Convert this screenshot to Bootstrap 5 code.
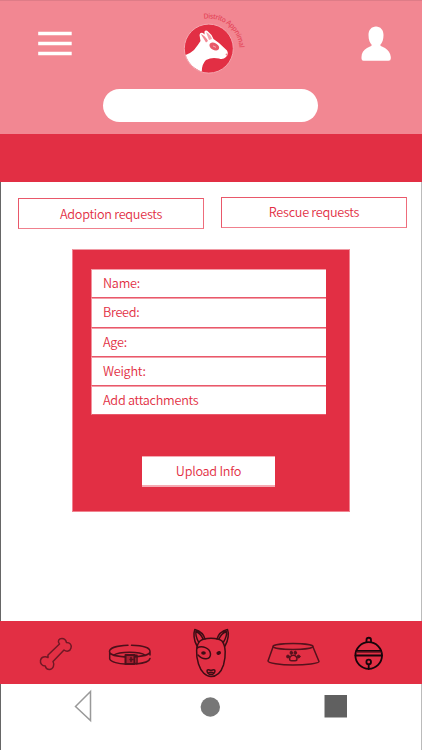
<!DOCTYPE html>
<html lang="en">
<head>
<meta charset="utf-8">
<meta name="viewport" content="width=device-width, initial-scale=1">
<title>Distrito Appnimal</title>
<link href="https://cdn.jsdelivr.net/npm/bootstrap@5.3.0/dist/css/bootstrap.min.css" rel="stylesheet">
<style>
  :root { --brand: #e22f44; --brand-soft: #f28792; }
  body { font-family: "Noto Sans CJK SC", "Open Sans", sans-serif; font-size: 12.7px; font-weight: 350; letter-spacing: -.28px; line-height: 20px; color: var(--brand); overflow: hidden; }
  svg { display: block; flex: none; overflow: visible; }
  .app { height: 750px; border-left: 1px solid #666; border-right: 1px solid #bbb; }
  .top, .strip, .tabs { margin: 0 -1px; }
  .top { height: 134px; background: var(--brand-soft); border-top: 1px solid #de7c87; }
  .top-row { padding: 9px 31px 0 38px; height: 88px; }
  .menu-icon { margin-top: 22px; }
  .user-icon { margin-top: 16px; }
  .search { width: 215px; height: 33px; margin-left: 103px; border-radius: 17px; }
  .strip { height: 48px; background: var(--brand); }
  .choices { padding: 15px 14px 0 17px; }
  .choice { height: 31px; width: 186px; border: 1px solid #e9586a; border-right-color: #ee6c7b; border-bottom-color: #f0808d; border-radius: 0; color: var(--brand); font-size: inherit; font-weight: inherit; letter-spacing: inherit; line-height: 20px; padding: 2px 0 4px; background: #fff; }
  .choice.lower { margin-top: 1px; padding: 3px 0; }
  .panel { width: 278px; height: 263px; margin: 20px 0 0 71px; padding: 19px 24px 0 18px; background: var(--brand); border: 1px solid #f1838f; border-top-color: #f09aa4; }
  .fields { width: 235px; }
  .field { height: 29.3px; padding: 3px 11px; border-radius: 0; border: solid #f3939e; border-width: 1px 0 1px 1px; border-top-color: #f3a0aa; border-bottom-color: #e9586a; color: var(--brand); background: #fff; }
  .upload { width: 133px; height: 31px; margin: 40.500px 0 0 51px; border-radius: 0; border: 0; border-top: 1px solid #f5aab3; border-bottom: 2px solid #f5aab3; padding: 3px 0; background: #fff; color: var(--brand); font-size: inherit; font-weight: inherit; letter-spacing: inherit; line-height: 20px; }
  .content { height: 439px; }
  .tabs { height: 63px; background: var(--brand); }
  .system { height: 66px; }
</style>
<script src="https://cdn.jsdelivr.net/npm/bootstrap@5.3.0/dist/js/bootstrap.bundle.min.js"></script>
</head>
<body class="bg-white">
<div class="app">
  <header class="top">
    <div class="top-row d-flex justify-content-between align-items-start">
      <svg class="menu-icon" width="34" height="24" fill="#fff"><path d="M.2-.2h33.500v3.500H.2zM.2 9.800h33.500v3.500H.2zM.2 19.800h33.500v3.500H.2z"/></svg>
      <svg width="67" height="67" viewBox="183 10 67 67">
        <defs>
          <path id="arc" d="M178.500 49A30.500 30.500 0 0 1 239.500 49A30.500 30.500 0 0 1 236 63"/>
          <clipPath id="disc"><circle cx="208.800" cy="48.600" r="24"/></clipPath>
        </defs>
        <circle cx="208.800" cy="48.600" r="24.500" fill="#e22f44" stroke="#f5a5ae" stroke-width="1"/>
        <g clip-path="url(#disc)">
          <path d="M183 56Q190 54 194 50Q198 45 200.500 41L199.500 35Q200 32 203 33L204.500 34.500V31.500Q206 29.500 208.500 32Q212 34.500 213.500 39L219 43L227 50.500Q229 54 226 57Q223 60 219 58.500L214 58Q210 58 206 60Q201 65 202 74H183z" fill="#fff"/>
          <path d="M200.800 34L206 42.500L208 41Q205 35.500 200.800 34z" fill="#f28792"/>
          <path d="M206 32Q211 35 212 39L209 40z" fill="#f4a0aa"/>
          <ellipse cx="214.300" cy="46.500" rx="5.200" ry="3.500" transform="rotate(28 214.300 46.500)" fill="#e8596a"/>
          <path d="M213 46L216 47.300" stroke="#f6aab3" stroke-width="1"/>
          <circle cx="226.600" cy="54.500" r="1" fill="#f28792"/>
        </g>
        <text font-family="Open Sans, sans-serif" font-size="7" font-weight="600" letter-spacing="0" fill="#e5495c"><textPath href="#arc" startOffset="42.500" textLength="52" lengthAdjust="spacing">Distrito Appnimal</textPath></text>
      </svg>
      <svg class="user-icon" width="30" height="35" fill="#fff"><path d="M15 .5C10.500.5 7.500 4 7.500 9C7.500 14 9 17 10.800 19C10.500 20.300 8 21 6 22C2.500 24 .5 27 .5 31V32.500Q.5 34.800 2.500 34.800H27.500Q29.800 34.800 29.800 32.500V31C29.500 27 27 24 24 22C22 21 19.500 20.300 19.200 19C21.500 16.500 22.500 13.500 22.500 9C22.500 4 19.500.5 15 .5z"/></svg>
    </div>
    <div class="search bg-white"></div>
  </header>
  <div class="strip"></div>

  <main class="content">
    <div class="choices d-flex justify-content-between align-items-start">
      <button class="btn choice lower">Adoption requests</button>
      <button class="btn choice">Rescue requests</button>
    </div>
    <section class="panel">
      <div class="fields">
        <div class="field">Name:</div>
        <div class="field">Breed:</div>
        <div class="field">Age:</div>
        <div class="field">Weight:</div>
        <div class="field">Add attachments</div>
      </div>
      <button class="btn upload">Upload Info</button>
    </section>
  </main>

  <nav class="tabs">
    <svg width="422" height="63" viewBox="0 621 422 63" fill="none" stroke="#3d0d14" stroke-width="1.500" stroke-linejoin="round" stroke-linecap="round">
      <!-- bone -->
      <path stroke="#701825" d="M48 655L59.500 644C57 641 59 638.500 62 638.500Q65.500 638.500 66.500 642.500C70 642.500 72 645 71 648C70 651.500 66.500 652 64 650L53 661.500C55 665 53 669.500 49.500 669.500Q46 669.500 45.300 666C42 666 40 663.500 40.500 660.500C41 656.500 45.500 656 48 657.500z"/>
      <!-- collar -->
      <g stroke="#4d101a">
        <path d="M128 645.300C117 645.700 109.500 648 109.500 651.500S118 657 129.500 657S150 655 150 651.500S143 645.500 131.500 645.300M109.700 652V659C111 662 119 664 125 664M136 664C144 663.200 149.500 661 150 658.500M150 651.500V655M114 655C119 651.300 140 651.300 145 655"/>
        <rect x="125.500" y="655" width="9" height="9" stroke-width="2" fill="#a81f31"/><path d="M134 655.200H137V663.500H134M130 659.500H133M131 657.500V661.500"/>
      </g>
      <!-- bull terrier -->
      <g>
        <path d="M200 641C204 637.300 218 637.300 222 641C226 646 226 656 223.500 665C220.500 674 216 676.500 211 676.500S201 672 198.500 664C195.500 654 196 645 200 641z"/>
        <path d="M197 646C193.500 640 193.500 633 194.800 629.500C200 631 204 635 205 639M225 646C228.500 640 229 633 227.500 629.500C222 631 218 635 217 639M198.500 642C196.500 638 195.500 633.500 196 631.500C199.500 633 202 636.500 203 639M223.500 642C226 638 226.800 633.500 226.300 631.500C222.800 633 220 636.500 219 639"/>
        <path d="M197 648C202 645 210 648 210.500 654C210.500 660 203 660.500 198 655"/>
        <ellipse cx="203.500" cy="653" rx="1.600" ry="1" fill="#3d0d14"/><ellipse cx="218.700" cy="653" rx="1.600" ry="1" transform="rotate(-20 218.700 653)" fill="#3d0d14"/>
        <path d="M207 671C207 669 209 669.500 211 670.500C213 669.500 215 669 215 671Q214.500 674.500 211 674.500T207 671zM209 672.500H213"/>
      </g>
      <!-- food bowl -->
      <g stroke="#55121c">
        <ellipse cx="293" cy="646.500" rx="20" ry="2.900"/><path d="M273 647L268 661C268 663 280 665 293 665S319 663.500 319 661.500L313 647"/>
        <path d="M293.300 655.300C290.500 655.300 289 658 289.800 660C290.800 661.300 292 660.700 293.300 660.700S296 661.300 296.800 660C297.500 658 296 655.300 293.300 655.300z"/>
        <g fill="#55121c" stroke-width=".8"><ellipse cx="291.300" cy="652.800" rx="1.300" ry="1.700"/><ellipse cx="295.300" cy="652.800" rx="1.300" ry="1.700"/><circle cx="288" cy="656.500" r="1.500"/><circle cx="298.600" cy="656.500" r="1.500"/></g>
      </g>
      <!-- bell -->
      <g stroke="#16050a" stroke-width="1.800">
        <circle cx="368.700" cy="655.500" r="13.300"/><path d="M366.500 642V640A2.200 2.200 0 0 1 371 640V642M356.500 650.800H381M355.500 655.500H382M368.700 664.500V669"/><circle cx="368.700" cy="662" r="2.300"/>
        <path stroke="#6b1622" stroke-width="1" d="M356.500 652.300H381"/>
      </g>
    </svg>
  </nav>
  <div class="system">
    <svg width="420" height="66" viewBox="1 684 420 66"><path d="M75.500 706.500L90.500 691.500V720.500z" fill="#fff" stroke="#999" stroke-width="1.500"/><circle cx="210.300" cy="707" r="9.700" fill="#777"/><path d="M324.500 695H347V717.500H324.500z" fill="#606060"/></svg>
  </div>
</div>
</body>
</html>
